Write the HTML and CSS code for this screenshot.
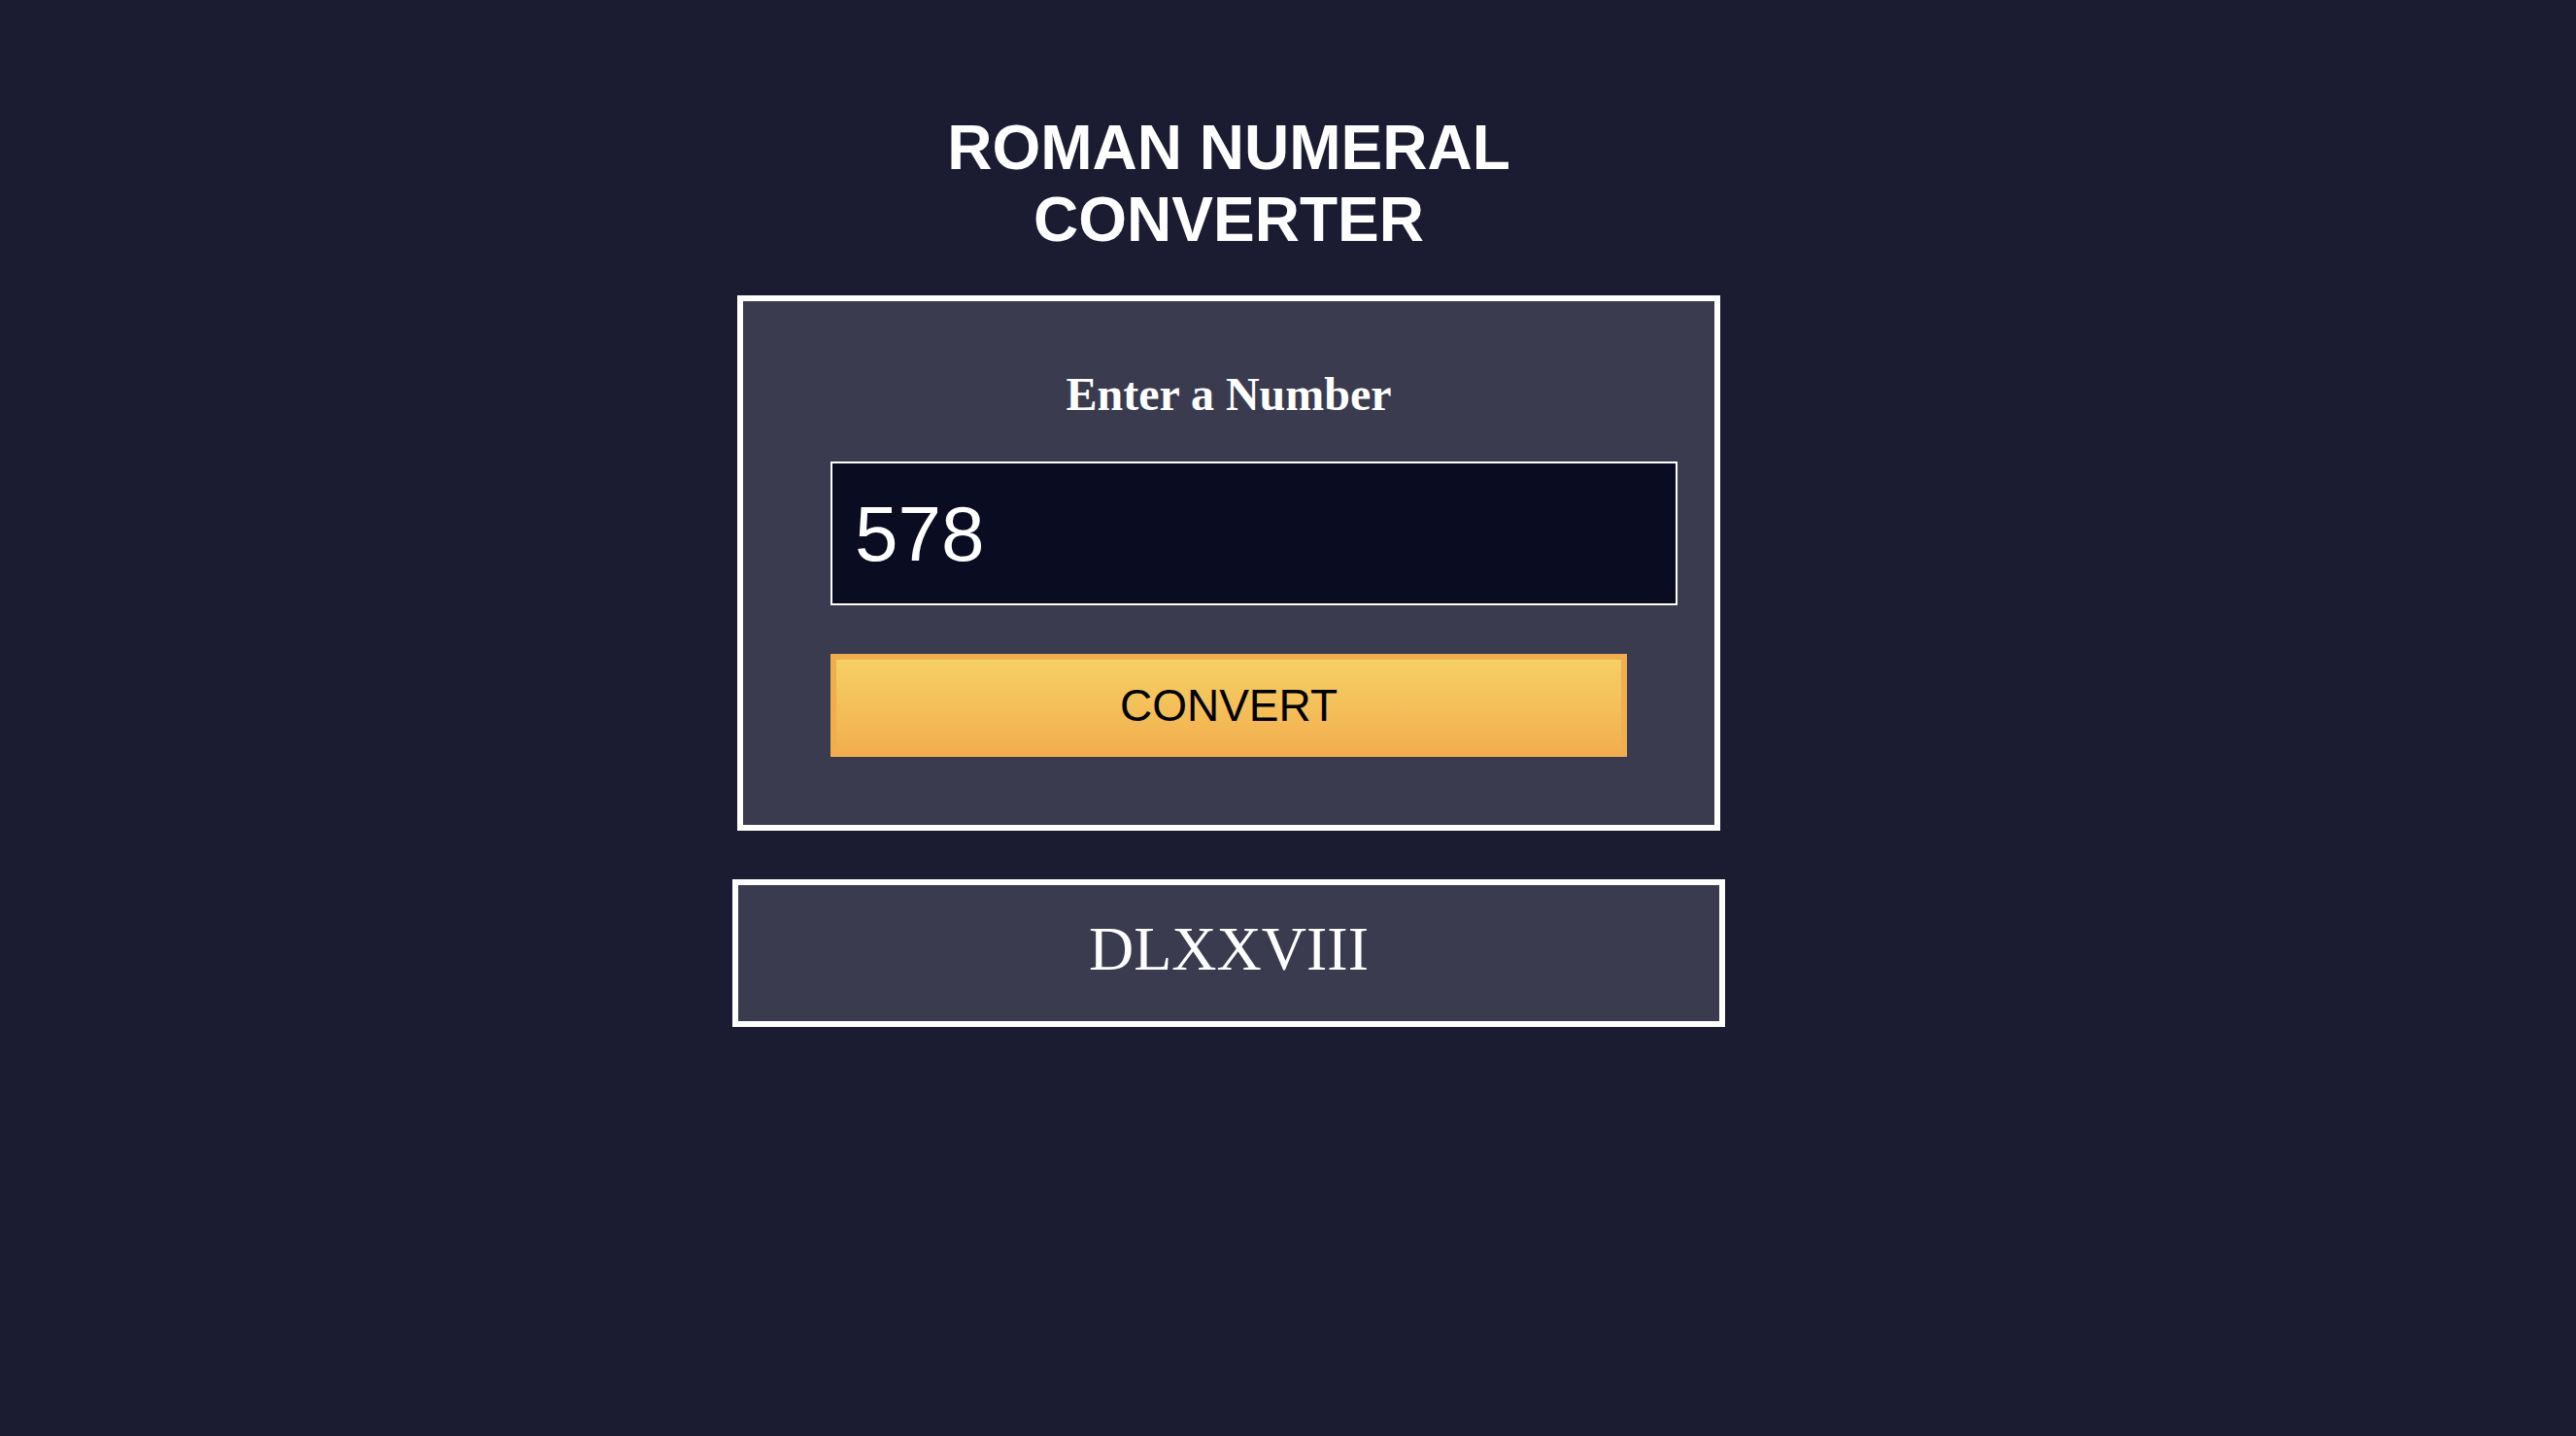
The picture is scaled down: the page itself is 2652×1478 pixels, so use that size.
FILE: index.html
```html
<!DOCTYPE html>
<html lang="en">
<head>
<meta charset="utf-8">
<title>Roman Numeral Converter</title>
<link rel="stylesheet" href="styles.css">
</head>
<body>
<main class="page">
  <h1 class="title">ROMAN NUMERAL<br>CONVERTER</h1>
  <form class="converter" onsubmit="return false;">
    <label class="label" for="number">Enter a Number</label>
    <input class="number-input" id="number" type="number" value="578">
    <button class="convert-btn" type="button">CONVERT</button>
  </form>
  <div class="output">DLXXVIII</div>
</main>
</body>
</html>
```
FILE: styles.css
```css
html, body {
  margin: 0;
  padding: 0;
  background: #1b1b32;
  color: #ffffff;
  height: 100%;
}

.page {
  display: flex;
  flex-direction: column;
  align-items: center;
  padding: 116px 122px 0 0;
  min-height: 100%;
  box-sizing: border-box;
}

.title {
  margin: 0;
  font-family: "Liberation Sans", Arial, sans-serif;
  font-weight: 700;
  font-size: 64px;
  line-height: 73.5px;
  text-align: center;
  color: #ffffff;
}

.converter {
  margin-top: 41px;
  width: 1012px;
  box-sizing: border-box;
  border: 6px solid #ffffff;
  background: #3b3b4f;
  padding: 69px 0 70px;
  display: flex;
  flex-direction: column;
  align-items: flex-start;
}

.label {
  align-self: stretch;
  text-align: center;
  font-family: "Liberation Serif", "Times New Roman", serif;
  font-weight: 700;
  font-size: 48px;
  line-height: 54px;
  color: #ffffff;
}

.number-input {
  margin: 42px 0 0 90px;
  width: 872px;
  height: 148px;
  box-sizing: border-box;
  border: 2px solid #ffffff;
  border-radius: 0;
  background: #0a0c21;
  color: #ffffff;
  font-family: "Liberation Sans", Arial, sans-serif;
  font-size: 80px;
  padding: 2px 0 0 23px;
  outline: none;
  -moz-appearance: textfield;
}

.number-input::-webkit-outer-spin-button,
.number-input::-webkit-inner-spin-button {
  -webkit-appearance: none;
  margin: 0;
}

.convert-btn {
  margin: 50px 0 0 90px;
  width: 820px;
  height: 106px;
  box-sizing: border-box;
  border: 6px solid #f0ae4d;
  border-radius: 0;
  background: linear-gradient(#f6d064, #f2af4f);
  color: #000000;
  font-family: "Liberation Sans", Arial, sans-serif;
  font-size: 46px;
  padding: 0;
  cursor: pointer;
}

.output {
  margin-top: 50px;
  width: 1022px;
  box-sizing: border-box;
  border: 6px solid #ffffff;
  background: #3b3b4f;
  padding: 29px 0 37px;
  text-align: center;
  font-family: "Liberation Serif", "Times New Roman", serif;
  font-size: 64px;
  line-height: 74px;
  color: #ffffff;
}
```
